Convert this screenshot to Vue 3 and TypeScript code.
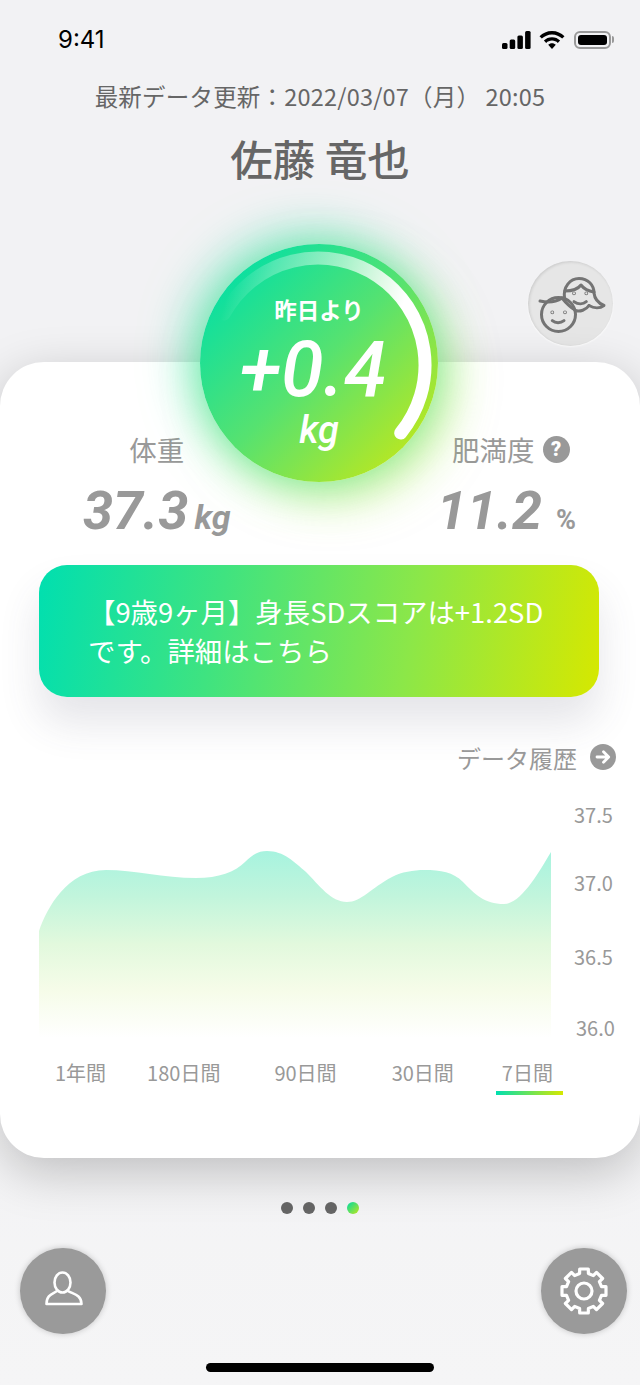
<template>
  <main class="screen">
    <header class="status">
      <span class="time">9:41</span>
      <div class="status-icons">
        <svg width="29" height="18" viewBox="0 0 29 18">
          <rect x="0" y="12" width="5.500" height="6" rx="1.500" />
          <rect x="7.700" y="8.500" width="5.500" height="9.500" rx="1.500" />
          <rect x="15.400" y="4.500" width="5.500" height="13.500" rx="1.500" />
          <rect x="23.100" y="0" width="5.500" height="18" rx="1.500" />
        </svg>
        <svg width="26" height="18" viewBox="0 0 26 18">
          <path d="M13 0C8 0 3.800 2 0.500 5.200L2.800 7.600C5.500 5 9 3.400 13 3.400S20.500 5 23.200 7.600L25.500 5.200C22.200 2 18 0 13 0Z" />
          <path d="M13 6.200C9.800 6.200 7 7.400 4.900 9.500L7.200 11.900C8.700 10.500 10.700 9.600 13 9.600S17.300 10.500 18.800 11.900L21.100 9.500C19 7.400 16.200 6.200 13 6.200Z" />
          <path d="M13 12.300C11.500 12.300 10.200 12.900 9.200 13.800L13 18L16.800 13.800C15.800 12.900 14.500 12.300 13 12.300Z" />
        </svg>
        <div class="battery"><span class="battery-fill"></span></div>
      </div>
    </header>

    <p class="updated">最新データ更新：2022/03/07（月） 20:05</p>
    <h1 class="name">佐藤 竜也</h1>

    <div class="switch-row">
      <button class="switch-btn">
        <svg width="85" height="85" viewBox="0 0 85 85" fill="none" stroke="#747474" stroke-width="3" stroke-linecap="round" stroke-linejoin="round">
          <circle cx="30.500" cy="53.500" r="17" />
          <path d="M12 40C20 42 28 41 34 37C38 42 42 46 47 49" />
          <circle cx="24.300" cy="51.300" r="0.400" />
          <circle cx="37" cy="51.300" r="0.400" />
          <path d="M24.300 59.700C27.500 62.500 32.500 62.500 36 59.700" />
          <path d="M36.500 37C35 26 42 17.500 51 17.500C60 17.500 66 24 66 32C66.500 37 70 42 76 44.500C72 47.500 66 47.500 61 44.500" />
          <path d="M37 30C44 30 50 28 53 24C56 28 60 30 66 31" />
          <path d="M47 49.500C52 51 58 49 61 44.500" />
          <circle cx="46" cy="32.300" r="0.400" />
          <circle cx="58.300" cy="32.300" r="0.400" />
          <path d="M46 40.700C50 43.500 55 43.500 58.300 40.700" />
        </svg>
      </button>
    </div>

    <section class="card">
      <div class="gauge">
        <svg class="gauge-ring" width="238" height="238" viewBox="0 0 238 238" fill="none">
          <defs>
            <linearGradient id="ringFade" gradientUnits="userSpaceOnUse" x1="24" y1="60" x2="205" y2="110">
              <stop offset="0" stop-color="#fff" stop-opacity="0" />
              <stop offset="0.2" stop-color="#fff" stop-opacity="0.25" />
              <stop offset="0.55" stop-color="#fff" stop-opacity="0.55" />
              <stop offset="0.92" stop-color="#fff" stop-opacity="1" />
            </linearGradient>
          </defs>
          <path d="M24 70A107 107 0 1 1 200.700 189" stroke="url(#ringFade)" stroke-width="13" stroke-linecap="round" />
        </svg>
        <span class="gauge-label">昨日より</span>
        <span class="gauge-value">+0.4</span>
        <span class="gauge-unit">kg</span>
      </div>

      <div class="stats">
        <div class="stat">
          <div class="stat-label">体重</div>
          <div class="stat-value">37.3<small class="unit-kg">kg</small></div>
        </div>
        <div class="stat">
          <div class="stat-label stat-label-help">肥満度<span class="help">?</span></div>
          <div class="stat-value">11.2<small class="unit-pct">%</small></div>
        </div>
      </div>

      <div class="banner">【9歳9ヶ月】身長SDスコアは+1.2SD<br />です。詳細はこちら</div>

      <div class="history">
        <span>データ履歴</span>
        <svg width="26" height="26" viewBox="0 0 26 26">
          <circle cx="13" cy="13" r="13" fill="#999" />
          <path d="M7 13H18M13.500 7.800L18.700 13L13.500 18.200" fill="none" stroke="#fff" stroke-width="2.800" stroke-linecap="round" stroke-linejoin="round" />
        </svg>
      </div>

      <div class="chart">
        <svg width="512" height="240" viewBox="0 0 512 240">
          <defs>
            <linearGradient id="areaFill" gradientUnits="userSpaceOnUse" x1="0" y1="50" x2="0" y2="238">
              <stop offset="0" stop-color="#a6f3df" />
              <stop offset="0.25" stop-color="#c2f5dc" />
              <stop offset="0.5" stop-color="#e2f9dd" />
              <stop offset="0.75" stop-color="#f6fce9" />
              <stop offset="1" stop-color="#ffffff" />
            </linearGradient>
          </defs>
          <path
            d="M0 131C8 108 28 70 67 70C95 70 125 78 157 78C180 78 196 72 206 62C214 54 220 51 228 51C245 51 255 62 267 72C280 85 292 102 308 102C322 102 332 88 353 77C362 72 375 70 385 70C402 70 414 72 424 82C436 94 445 104 465 104C482 104 500 72 512 52V238H0Z"
            fill="url(#areaFill)"
          />
        </svg>
        <div class="ticks">
          <span v-for="t in ticks" :key="t" class="tick">{{ t }}</span>
        </div>
      </div>

      <div class="tabs">
        <span v-for="tab in tabs" :key="tab" class="tab" :class="{ active: tab === '7日間' }">{{ tab }}</span>
      </div>
    </section>

    <div class="dots">
      <span class="dot"></span>
      <span class="dot"></span>
      <span class="dot"></span>
      <span class="dot dot-on"></span>
    </div>

    <div class="actions">
      <button class="round-btn">
        <svg width="86" height="86" viewBox="0 0 86 86" fill="none" stroke="#fff" stroke-width="2.600" stroke-linejoin="round">
          <ellipse cx="42.500" cy="34.500" rx="8" ry="10" />
          <path d="M37 43C33 46 26.500 46.500 26.500 56H61.500C61.500 46.500 53 46 48 43" />
        </svg>
      </button>
      <button class="round-btn">
        <svg width="86" height="86" viewBox="0 0 86 86" fill="none" stroke="#fff" stroke-width="3.200" stroke-linejoin="round">
          <path :d="gearPath" />
          <circle cx="43" cy="43" r="8" />
        </svg>
      </button>
    </div>

    <div class="home-bar"></div>
  </main>
</template>

<script setup lang="ts">
const ticks = ['37.5', '37.0', '36.5', '36.0']
const tabs = ['1年間', '180日間', '90日間', '30日間', '7日間']

// 8 teeth around the centre of the 86px button
const buildGear = (): string => {
  const pt = (r: number, deg: number) => {
    const a = (deg * Math.PI) / 180
    return `${(43 + r * Math.cos(a)).toFixed(1)} ${(43 + r * Math.sin(a)).toFixed(1)}`
  }
  let d = ''
  for (let i = 0; i < 8; i++) {
    const c = i * 45 - 90
    d += `${i === 0 ? 'M' : 'L'}${pt(18, c - 14)}L${pt(22.4, c - 11)}L${pt(22.4, c + 11)}L${pt(18, c + 14)}`
  }
  return d + 'Z'
}
const gearPath = buildGear()
</script>

<style>
body {
  background: #f2f2f4;
}
</style>

<style scoped>
.screen {
  width: 640px;
  height: 1385px;
  overflow: hidden;
  display: flex;
  flex-direction: column;
  background: linear-gradient(180deg, #f2f2f4 0%, #f2f2f4 70%, #f5f5f6 100%);
  font-family: "Noto Sans CJK JP", "Noto Sans", sans-serif;
  color: #666;
}

.status {
  height: 79px;
  flex: none;
  display: flex;
  justify-content: space-between;
  align-items: center;
  padding: 0 26px 0 58px;
}
.time {
  font-family: Inter, sans-serif;
  font-size: 24px;
  font-weight: 400;
  color: #000;
}
.status-icons {
  display: flex;
  align-items: center;
  gap: 8px;
}
.status-icons svg {
  fill: #000;
}
.battery {
  width: 37px;
  height: 18px;
  box-sizing: border-box;
  border: 2px solid #999;
  border-radius: 6px;
  padding: 2px;
  margin-left: 1px;
  margin-right: 3px;
  position: relative;
}
.battery::after {
  content: '';
  position: absolute;
  right: -5px;
  top: 3px;
  width: 2px;
  height: 7px;
  background: #999;
  border-radius: 0 2px 2px 0;
}
.battery-fill {
  display: block;
  height: 100%;
  background: #000;
  border-radius: 3px;
}

.updated {
  margin: 0;
  height: 34px;
  line-height: 34px;
  text-align: center;
  font-size: 23.500px;
  letter-spacing: 0.2px;
  white-space: nowrap;
  color: #666;
}
.name {
  margin: 15px 0 0;
  height: 60px;
  line-height: 60px;
  text-align: center;
  font-size: 42.500px;
  font-weight: 500;
  color: #666;
}

.switch-row {
  height: 174px;
  flex: none;
  box-sizing: border-box;
  padding: 73px 27px 0 0;
  display: flex;
  justify-content: flex-end;
}
.switch-btn {
  width: 85px;
  height: 85px;
  padding: 0;
  border: none;
  border-radius: 50%;
  background: #e6e6e6;
  box-shadow: inset 1px 1px 3px rgba(0, 0, 0, 0.12), 0 1px 2px rgba(255, 255, 255, 0.9);
}

.card {
  position: relative;
  height: 796px;
  flex: none;
  box-sizing: border-box;
  padding-top: 68px;
  background: #fff;
  border-radius: 44px;
  box-shadow: 0 14px 50px rgba(0, 0, 0, 0.22);
}

.gauge {
  position: absolute;
  left: 200px;
  top: -118px;
  width: 238px;
  height: 238px;
  border-radius: 50%;
  display: flex;
  flex-direction: column;
  align-items: center;
  color: #fff;
  background: linear-gradient(135deg, #00dfa8 8%, #56e270 50%, #c2e81a 92%);
  box-shadow: -8px -6px 50px rgba(0, 222, 150, 0.6), 12px 16px 46px rgba(170, 232, 60, 0.55);
}
.gauge-ring {
  position: absolute;
  inset: 0;
}
.gauge-label {
  margin-top: 48px;
  height: 34px;
  line-height: 34px;
  font-size: 22.500px;
  font-weight: 700;
}
.gauge-value {
  margin: 8px 0 0 -12px;
  height: 72px;
  line-height: 72px;
  font-family: Roboto, sans-serif;
  font-size: 77px;
  font-weight: 500;
  font-style: italic;
}
.gauge-unit {
  margin-top: 2px;
  height: 44px;
  line-height: 44px;
  font-family: Roboto, sans-serif;
  font-size: 38px;
  font-weight: 500;
  font-style: italic;
}

.stats {
  display: flex;
  justify-content: space-between;
  padding: 0 64px 0 83px;
  color: #999;
}
.stat {
  display: flex;
  flex-direction: column;
  align-items: center;
}
.stat-label {
  display: flex;
  align-items: center;
  height: 38px;
  font-size: 27.500px;
}
.stat-label-help {
  padding-left: 9px;
}
.help {
  width: 27px;
  height: 27px;
  margin-left: 8px;
  border-radius: 50%;
  background: #999;
  color: #fff;
  font-family: Roboto, sans-serif;
  font-size: 20px;
  font-weight: 900;
  line-height: 27px;
  text-align: center;
}
.stat-value {
  margin-top: 13px;
  height: 60px;
  line-height: 60px;
  font-family: Roboto, sans-serif;
  font-size: 54px;
  font-weight: 700;
  font-style: italic;
  white-space: nowrap;
}
.unit-kg {
  margin-left: 6px;
  font-size: 34px;
}
.unit-pct {
  margin-left: 14px;
  font-size: 27px;
  font-style: normal;
}

.banner {
  margin: 24px 41px 0 39px;
  height: 132px;
  box-sizing: border-box;
  padding: 27px 20px 0 49px;
  border-radius: 28px;
  background: linear-gradient(100deg, #00dfb0 0%, #3fe380 32%, #8ce748 66%, #d6e800 100%);
  box-shadow: 0 26px 40px rgba(70, 70, 100, 0.14);
  color: #fff;
  font-size: 27.400px;
  line-height: 39px;
  white-space: nowrap;
}

.history {
  margin-top: 46px;
  height: 28px;
  padding-right: 24px;
  display: flex;
  justify-content: flex-end;
  align-items: center;
  gap: 13px;
  font-size: 24px;
  color: #999;
}

.chart {
  margin-top: 29px;
  height: 240px;
  padding-left: 39px;
  display: flex;
}
.ticks {
  margin-left: 23px;
  padding-top: 1px;
  display: flex;
  flex-direction: column;
  font-size: 20px;
  color: #999;
}
.tick {
  height: 28px;
  line-height: 28px;
}
.tick:nth-child(2) {
  margin-top: 40px;
}
.tick:nth-child(3) {
  margin-top: 46px;
}
.tick:nth-child(4) {
  margin-top: 43px;
  margin-left: 2px;
}

.tabs {
  margin-top: 19px;
  padding-left: 55px;
  display: flex;
  font-size: 20px;
  line-height: 28px;
  color: #999;
}
.tab {
  position: relative;
  white-space: nowrap;
}
.tab:nth-child(2) {
  margin-left: 41px;
}
.tab:nth-child(3) {
  margin-left: 54px;
}
.tab:nth-child(4) {
  margin-left: 55px;
}
.tab:nth-child(5) {
  margin-left: 48px;
}
.tab.active::after {
  content: '';
  position: absolute;
  left: -6px;
  right: -10px;
  top: 32px;
  height: 4px;
  background: linear-gradient(90deg, #00dfb0, #d6e800);
}

.dots {
  margin-top: 44px;
  display: flex;
  justify-content: center;
  gap: 10px;
  flex: none;
}
.dot {
  width: 12px;
  height: 12px;
  border-radius: 50%;
  background: #666;
}
.dot-on {
  background: linear-gradient(135deg, #00dfa8, #c2e81a);
}

.actions {
  margin-top: 34px;
  padding: 0 13px 0 20px;
  display: flex;
  justify-content: space-between;
  flex: none;
}
.round-btn {
  width: 86px;
  height: 86px;
  padding: 0;
  border: none;
  border-radius: 50%;
  background: #9a9a9a;
  box-shadow: 0 0 6px rgba(0, 0, 0, 0.2);
}

.home-bar {
  width: 228px;
  height: 9px;
  margin: 29px auto 0;
  border-radius: 5px;
  background: #000;
  flex: none;
}
</style>
